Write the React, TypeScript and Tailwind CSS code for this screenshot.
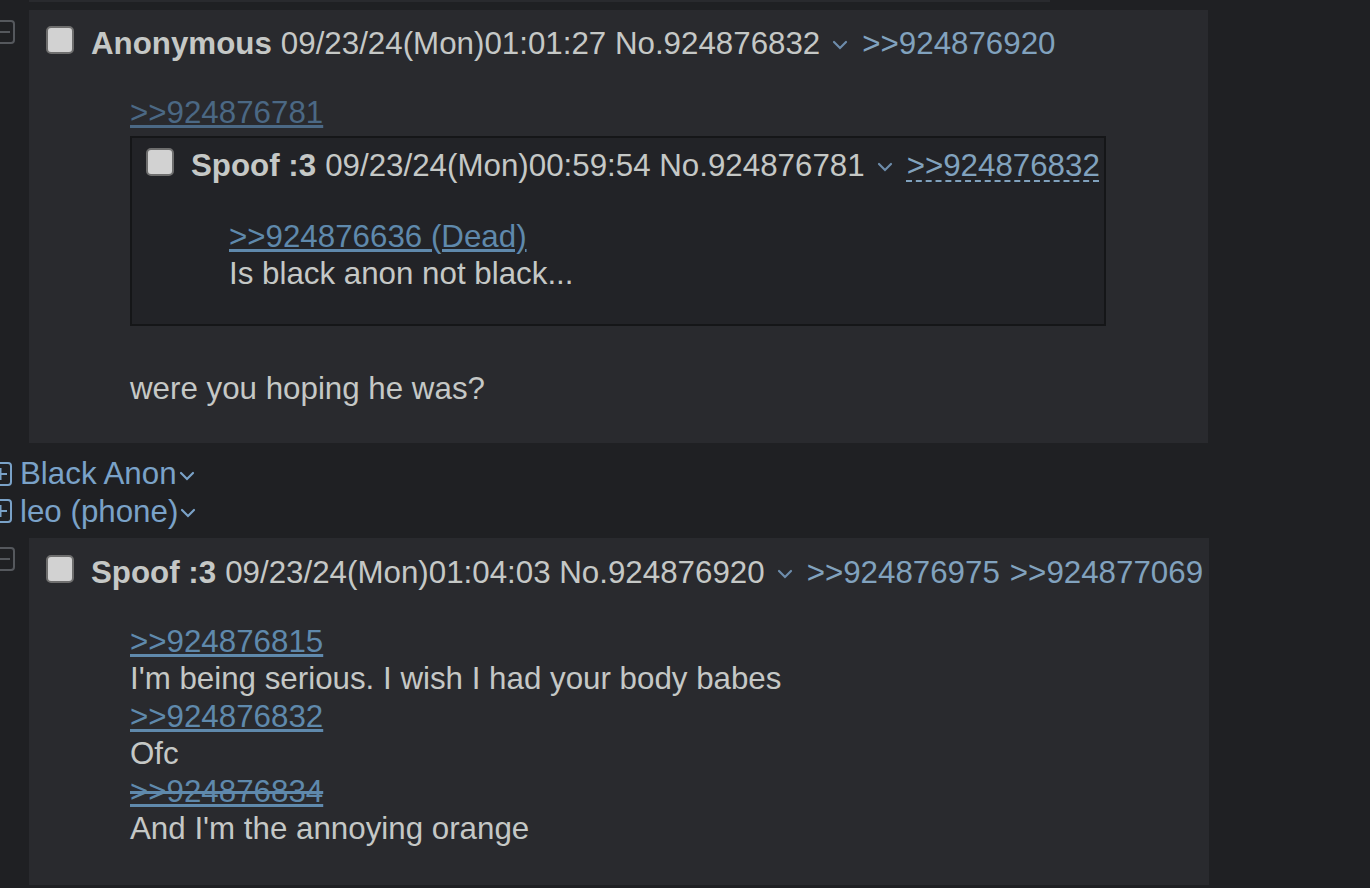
import React from 'react';

// reply menu caret
function Caret({ className = '' }: { className?: string }) {
  return (
    <svg width="16" height="10" viewBox="0 0 16 10" className={className}>
      <path d="M2 2 L8 8 L14 2" stroke="currentColor" strokeWidth="2.2" fill="none" strokeLinecap="round" />
    </svg>
  );
}

function Checkbox() {
  return <div className="mt-[1px] h-[28px] w-[28px] shrink-0 rounded-[5px] border-2 border-[#6e6e6e] bg-[#d2d2d2]" />;
}

function ToggleIcon({ plus = false }: { plus?: boolean }) {
  return (
    <svg width="23" height="24" viewBox="0 0 23 24" className={plus ? 'text-[#7aa2c8]' : 'text-[#55585d]'}>
      <rect x="1" y="1" width="21" height="22" rx="3" stroke="currentColor" strokeWidth="2" fill="none" />
      <path d="M5 12 H18" stroke="currentColor" strokeWidth="2" />
      {plus && <path d="M11.5 6 V18" stroke="currentColor" strokeWidth="2" />}
    </svg>
  );
}

type HeaderProps = {
  name: string;
  stamp: string;
  links: string[];
  dashed?: boolean;
};

function PostHeader({ name, stamp, links, dashed }: HeaderProps) {
  return (
    <div className="flex h-[37.5px] items-start whitespace-nowrap">
      <Checkbox />
      <span className="ml-[17px] font-bold">{name}</span>
      <span className="ml-[9px]">{stamp}</span>
      <Caret className="ml-[12px] mt-[15px] shrink-0 text-[#6d8cab]" />
      {links.map((l, i) => (
        <a
          key={l}
          className={
            (i === 0 ? 'ml-[14px] ' : 'ml-[10px] ') +
            (dashed
              ? 'text-[#81a2be] underline decoration-dashed decoration-2 underline-offset-[4px]'
              : 'text-[#81a2be]')
          }
        >
          {'>>' + l}
        </a>
      ))}
    </div>
  );
}

function QuoteLink({ children, dead }: { children: React.ReactNode; dead?: boolean }) {
  return (
    <div>
      <a
        className={
          dead
            ? 'text-[#5f89ac] [text-decoration-line:underline_line-through]'
            : 'text-[#5f89ac] underline'
        }
      >
        {children}
      </a>
    </div>
  );
}

function Stub({ name }: { name: string }) {
  return (
    <div className="flex h-[37.5px] items-center whitespace-nowrap text-[#7aa2c8]">
      <div className="-ml-[11px] shrink-0">
        <ToggleIcon plus />
      </div>
      <span className="ml-[8px]">{name}</span>
      <Caret className="ml-[2px] mt-[4px] shrink-0" />
    </div>
  );
}

export default function App() {
  return (
    <div className="h-[888px] overflow-hidden bg-[#1f2023] font-['Liberation_Sans',Arial,sans-serif] text-[31.3px] leading-[37.5px] text-[#c5c8c6]">
      {/* tail of the previous reply */}
      <div className="ml-[29px] h-[2px] w-[1021px] bg-[#292a2e]" />

      {/* Post 924876832 */}
      <div className="mt-[8px] flex">
        <div className="w-[29px] shrink-0 pt-[10px]">
          <div className="-ml-[8px]">
            <ToggleIcon />
          </div>
        </div>
        <div className="w-[1179px] bg-[#292a2e] pb-[36px] pl-[17px] pt-[15px]">
          <PostHeader name="Anonymous" stamp="09/23/24(Mon)01:01:27 No.924876832" links={['924876920']} />
          <div className="ml-[84px] mt-[31px]">
            <div>
              <a className="text-[#4b6884] underline">{'>>924876781'}</a>
            </div>
            {/* inlined quote */}
            <div className="mt-[5px] w-[976px] border-2 border-[#151618] bg-[#222327] pb-[31px] pl-[14px] pt-[9px]">
              <PostHeader
                name="Spoof :3"
                stamp="09/23/24(Mon)00:59:54 No.924876781"
                links={['924876832']}
                dashed
              />
              <div className="ml-[83px] mt-[33px]">
                <QuoteLink>{'>>924876636 (Dead)'}</QuoteLink>
                <div>Is black anon not black...</div>
              </div>
            </div>
            <div className="mt-[44px]">were you hoping he was?</div>
          </div>
        </div>
      </div>

      {/* hidden replies */}
      <div className="mt-[12px]">
        <Stub name="Black Anon" />
        <Stub name="leo (phone)" />
      </div>

      {/* Post 924876920 */}
      <div className="mt-[7.5px] flex">
        <div className="w-[29px] shrink-0 pt-[9px]">
          <div className="-ml-[8px]">
            <ToggleIcon />
          </div>
        </div>
        <div className="w-[1180px] bg-[#292a2e] pb-[37px] pl-[17px] pt-[16px]">
          <PostHeader
            name="Spoof :3"
            stamp="09/23/24(Mon)01:04:03 No.924876920"
            links={['924876975', '924877069']}
          />
          <div className="ml-[84px] mt-[31.5px] leading-[37.6px]">
            <QuoteLink>{'>>924876815'}</QuoteLink>
            <div>I'm being serious. I wish I had your body babes</div>
            <QuoteLink>{'>>924876832'}</QuoteLink>
            <div>Ofc</div>
            <QuoteLink dead>{'>>924876834'}</QuoteLink>
            <div>And I'm the annoying orange</div>
          </div>
        </div>
      </div>
    </div>
  );
}
